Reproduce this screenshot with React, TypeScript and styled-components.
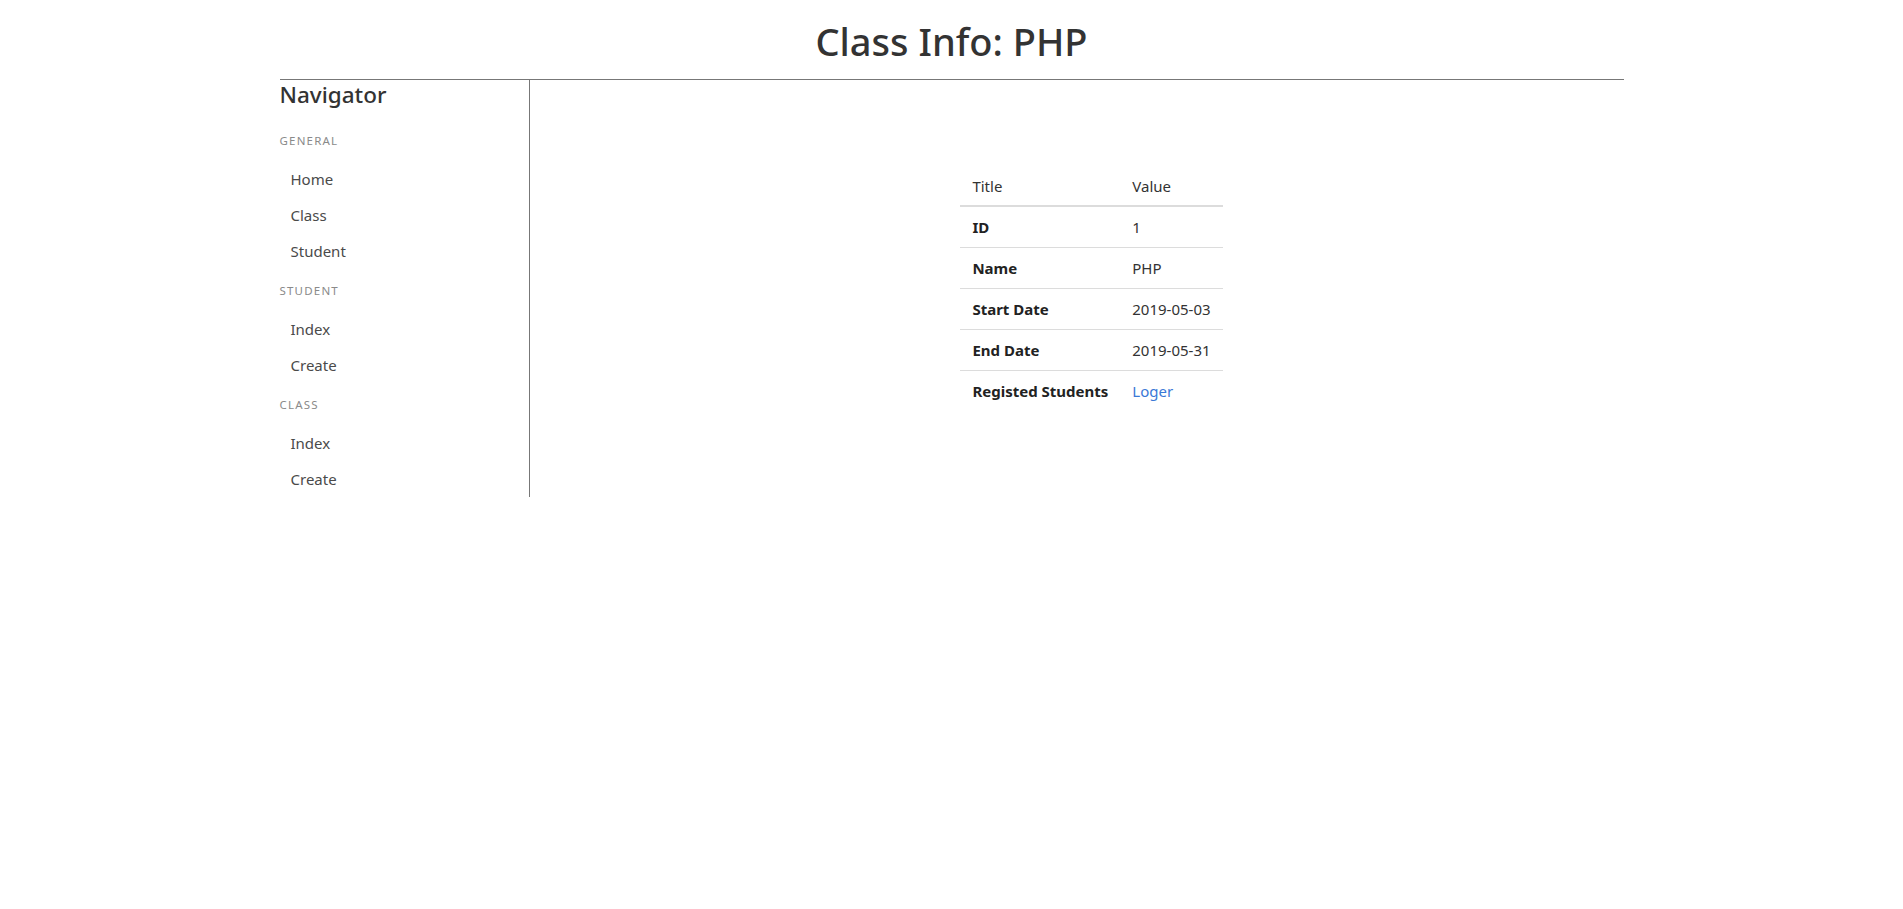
import React from "react";
import styled, { createGlobalStyle } from "styled-components";

const GlobalStyle = createGlobalStyle`
  html, body {
    margin: 0;
    padding: 0;
    background: #fff;
  }
  body {
    font-family: "Noto Sans", "Open Sans", sans-serif;
    font-size: 15px;
    color: #333;
  }
`;

const Page = styled.div`
  width: 1344px;
  margin: 0 auto;
`;

const Header = styled.header`
  border-bottom: 1px solid #777;
  padding-top: 17px;
  padding-bottom: 14px;
`;

const PageTitle = styled.h1`
  margin: 0;
  text-align: center;
  font-size: 38px;
  font-weight: 500;
  line-height: 48px;
  color: #333;
`;

const Body = styled.div`
  display: flex;
  align-items: flex-start;
`;

const Sidebar = styled.nav`
  width: 249px;
  flex: none;
  border-right: 1px solid #777;
  padding-bottom: 0;
`;

const NavTitle = styled.h4`
  margin: 0;
  font-size: 22.5px;
  font-weight: 500;
  line-height: 30px;
  color: #333;
`;

const SectionLabel = styled.div<{ $first?: boolean }>`
  font-size: 11.5px;
  letter-spacing: 1.2px;
  text-transform: uppercase;
  color: #8a8a8a;
  line-height: 16px;
  margin-top: ${(p) => (p.$first ? "23px" : "14px")};
  margin-bottom: 12px;
`;

const NavList = styled.ul`
  list-style: none;
  margin: 0;
  padding: 0;
`;

const NavLink = styled.a`
  display: block;
  padding: 6px 11px;
  line-height: 24px;
  font-size: 15px;
  color: #4a4a4a;
  text-decoration: none;
`;

const Content = styled.main`
  flex: 1;
  padding: 86px 0 0 30px;
  display: flex;
  justify-content: center;
`;

const Table = styled.table`
  border-collapse: collapse;
  font-size: 15px;
  color: #333;
`;

const HeadCell = styled.th`
  text-align: left;
  font-weight: 400;
  padding: 8px 12px 7px;
  line-height: 24px;
  border-bottom: 2px solid #dcdcdc;
`;

const RowHead = styled.th`
  text-align: left;
  font-weight: 700;
  padding: 8px 12px;
  line-height: 24px;
  white-space: nowrap;
  color: #222;
`;

const Cell = styled.td`
  padding: 8px 12px;
  line-height: 24px;
  white-space: nowrap;
`;

const Row = styled.tr<{ $border?: boolean }>`
  & > * {
    border-top: ${(p) => (p.$border ? "1px solid #dcdcdc" : "none")};
  }
`;

const Link = styled.a`
  color: #3a78d6;
  text-decoration: none;
`;

const sections = [
  { label: "General", items: ["Home", "Class", "Student"] },
  { label: "Student", items: ["Index", "Create"] },
  { label: "Class", items: ["Index", "Create"] },
];

const rows: { title: string; value: string; link?: boolean }[] = [
  { title: "ID", value: "1" },
  { title: "Name", value: "PHP" },
  { title: "Start Date", value: "2019-05-03" },
  { title: "End Date", value: "2019-05-31" },
  { title: "Registed Students", value: "Loger", link: true },
];

export default function App() {
  return (
    <>
      <GlobalStyle />
      <Page>
        <Header>
          <PageTitle>Class Info: PHP</PageTitle>
        </Header>
        <Body>
          <Sidebar>
            <NavTitle>Navigator</NavTitle>
            {sections.map((s, i) => (
              <React.Fragment key={s.label}>
                <SectionLabel $first={i === 0}>{s.label}</SectionLabel>
                <NavList>
                  {s.items.map((it) => (
                    <li key={it}>
                      <NavLink href="#">{it}</NavLink>
                    </li>
                  ))}
                </NavList>
              </React.Fragment>
            ))}
          </Sidebar>
          <Content>
            <Table>
              <thead>
                <tr>
                  <HeadCell>Title</HeadCell>
                  <HeadCell>Value</HeadCell>
                </tr>
              </thead>
              <tbody>
                {rows.map((r, i) => (
                  <Row key={r.title} $border={i > 0}>
                    <RowHead>{r.title}</RowHead>
                    <Cell>{r.link ? <Link href="#">{r.value}</Link> : r.value}</Cell>
                  </Row>
                ))}
              </tbody>
            </Table>
          </Content>
        </Body>
      </Page>
    </>
  );
}
